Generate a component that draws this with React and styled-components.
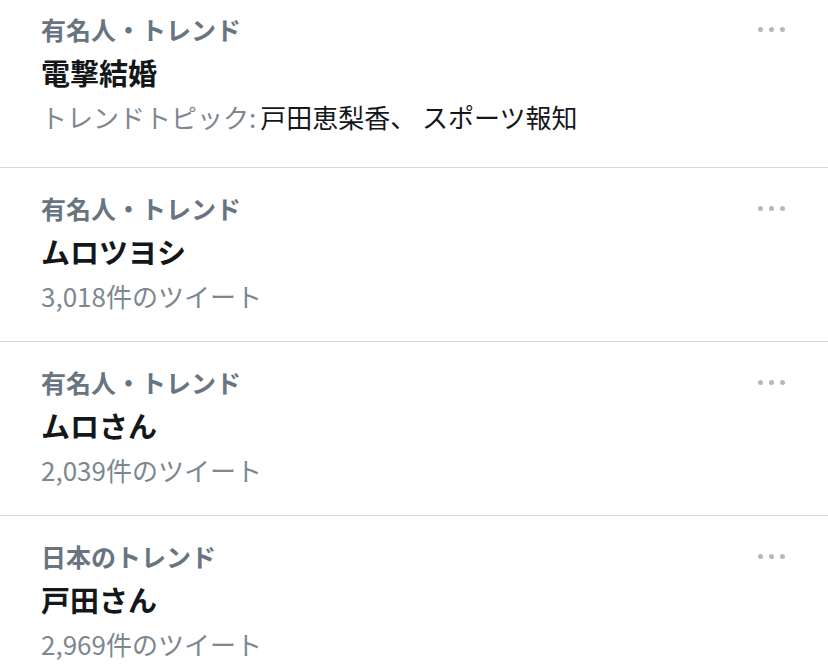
import React from 'react'
import styled, { createGlobalStyle } from 'styled-components'

const GlobalStyle = createGlobalStyle`
  body {
    margin: 0;
    background: #fff;
    font-family: "Noto Sans CJK JP", "Noto Sans", sans-serif;
  }
`

const List = styled.div`
  width: 828px;
  height: 670px;
  overflow: hidden;
  background: #fff;
`

const Row = styled.div`
  position: relative;
  padding: ${p => (p.$first ? '7px 0 28px' : '18px 0 23px')};
  padding-left: 41px;
  border-bottom: 1px solid #d8d8d8;
`

const Category = styled.div`
  font-size: 25px;
  line-height: 44px;
  font-weight: 700;
  color: #687480;
`

const Title = styled.div`
  font-size: 29px;
  line-height: 43px;
  font-weight: 700;
  color: #14171a;
`

const Meta = styled.div`
  font-size: 26px;
  line-height: 45px;
  font-weight: 400;
  color: #7c8790;
  white-space: nowrap;
`

const Topics = styled.span`
  margin-left: 4px;
  color: #14171a;
`

const More = styled.div`
  position: absolute;
  right: 43px;
  top: ${p => (p.$first ? '7px' : '18px')};
  height: 44px;
  display: flex;
  align-items: center;
  gap: 6px;

  span {
    width: 5px;
    height: 5px;
    border-radius: 50%;
    background: #b3b8bc;
  }
`

const trends = [
  { category: '有名人・トレンド', title: '電撃結婚', topics: '戸田恵梨香、 スポーツ報知' },
  { category: '有名人・トレンド', title: 'ムロツヨシ', count: '3,018件のツイート' },
  { category: '有名人・トレンド', title: 'ムロさん', count: '2,039件のツイート' },
  { category: '日本のトレンド', title: '戸田さん', count: '2,969件のツイート' },
]

export default function App() {
  return (
    <>
      <GlobalStyle />
      <List>
        {trends.map((t, i) => (
          <Row key={i} $first={i === 0}>
            <Category>{t.category}</Category>
            <Title>{t.title}</Title>
            {t.topics ? (
              <Meta>トレンドトピック:<Topics>{t.topics}</Topics></Meta>
            ) : (
              <Meta>{t.count}</Meta>
            )}
            <More $first={i === 0}>
              <span /><span /><span />
            </More>
          </Row>
        ))}
      </List>
    </>
  )
}
